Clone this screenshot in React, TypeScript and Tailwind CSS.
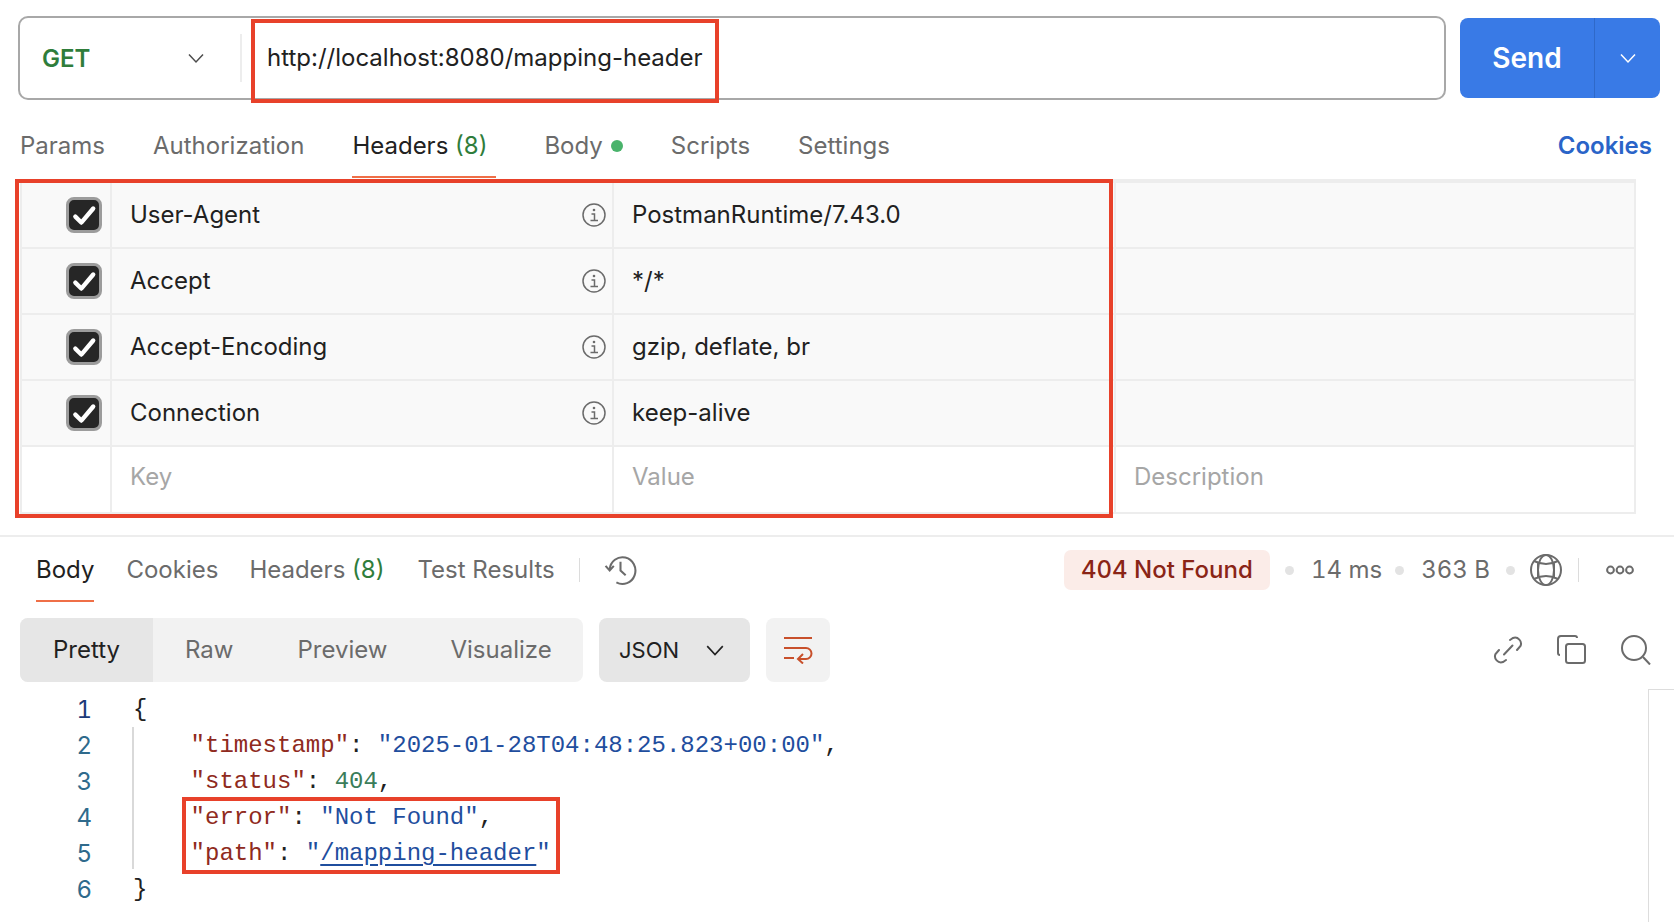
import React from "react";

const Chevron = ({ className = "" }: { className?: string }) => (
  <svg viewBox="0 0 18 18" className={className} fill="none" stroke="currentColor" strokeWidth="1.5">
    <path d="M2 5.5 L9 13 L16 5.5" />
  </svg>
);

const Info = () => (
  <svg viewBox="0 0 24 24" className="w-6 h-6 text-[#6b6b6b]" fill="none" stroke="currentColor" strokeWidth="1.5">
    <circle cx="12" cy="12" r="11" />
    <circle cx="12" cy="7" r="1.3" fill="currentColor" stroke="none" />
    <path d="M9.5 11 H12.5 V17 M8.5 17.5 H16" />
  </svg>
);

const Check = () => (
  <div className="w-9 h-9 rounded-[8px] bg-[#262626] border-[3px] border-[#9c9c9c] flex items-center justify-center">
    <svg viewBox="0 0 24 24" className="w-[26px] h-[26px]" fill="none" stroke="#fff" strokeWidth="4" strokeLinecap="round" strokeLinejoin="round">
      <path d="M4 13.5 L9.5 19 L20.5 6" />
    </svg>
  </div>
);

const rows = [
  ["User-Agent", "PostmanRuntime/7.43.0"],
  ["Accept", "*/*"],
  ["Accept-Encoding", "gzip, deflate, br"],
  ["Connection", "keep-alive"],
];

const Bullet = () => <span className="w-[9px] h-[9px] rounded-full bg-[#e3e3e3]" />;

const Q = ({ children }: { children: React.ReactNode }) => <span className="text-[#8f2a20]">{children}</span>;
const S = ({ children }: { children: React.ReactNode }) => <span className="text-[#1f4e9e]">{children}</span>;

const lineNums = [
  ["1", "text-[#1c3a78]"],
  ["2", "text-[#2f6a8c]"],
  ["3", "text-[#2f6a8c]"],
  ["4", "text-[#2f6a8c]"],
  ["5", "text-[#2f6a8c]"],
  ["6", "text-[#2f6a8c]"],
];

export default function App() {
  return (
    <div className="relative w-[1674px] h-[922px] overflow-hidden bg-white text-[24px] leading-[32px] text-[#212121] font-['Inter',sans-serif]">
      {/* request bar */}
      <div className="flex items-center pt-[16px] pl-[18px] pr-[14px] gap-[14px]">
        <div className="w-[1428px] h-[84px] border-2 border-[#a8a8a8] rounded-[10px] flex items-center">
          <div className="w-[222px] h-[48px] flex items-center justify-between pl-[22px] pr-[35px] border-r-2 border-[#ededed] shrink-0">
            <span className="font-semibold text-[#2f7d3b] pt-[2px]">GET</span>
            <Chevron className="w-[18px] h-[18px] text-[#4d4d4d]" />
          </div>
          <span className="pl-[25px]">http://localhost:8080/mapping-header</span>
        </div>
        <div className="w-[200px] h-[80px] rounded-[8px] bg-[#397ae6] flex text-white">
          <div className="w-[135px] flex items-center justify-center font-semibold text-[28px] border-r border-[#2f69c9]">Send</div>
          <div className="flex-1 flex items-center justify-center">
            <Chevron className="w-[18px] h-[18px]" />
          </div>
        </div>
      </div>

      {/* request tabs */}
      <div className="flex justify-between items-start h-[79px] pl-[20px] pr-[22px] pt-[30px]">
        <div className="flex text-[#6b6b6b]">
          <span className="mr-[48px]">Params</span>
          <span className="mr-[48px]">Authorization</span>
          <span className="relative w-[144px] mr-[48px] text-[#212121]">
            Headers <span className="text-[#2f7d3b]">(8)</span>
            <span className="absolute left-0 right-0 top-[46px] h-[2px] bg-[#ef6f47]" />
          </span>
          <span className="flex items-center mr-[48px]">
            Body<span className="ml-[8px] w-[12px] h-[12px] rounded-full bg-[#49b36b]" />
          </span>
          <span className="mr-[48px]">Scripts</span>
          <span>Settings</span>
        </div>
        <span className="font-semibold text-[#2a64c8]">Cookies</span>
      </div>

      {/* headers table */}
      <div className="ml-[20px] w-[1616px] border-2 border-t-[4px] border-[#ededed]">
        {rows.map(([k, v]) => (
          <div key={k} className="flex h-[66px] bg-[#f9f9f9] border-b-2 border-[#ededed] items-center">
            <div className="w-[90px] h-full flex items-center justify-end pr-[8px] border-r-2 border-[#ededed] shrink-0">
              <Check />
            </div>
            <div className="w-[502px] h-full flex items-center justify-between pl-[18px] pr-[6px] border-r-2 border-[#ededed] shrink-0">
              <span>{k}</span>
              <Info />
            </div>
            <div className="w-[502px] h-full flex items-center pl-[18px] border-r-2 border-[#ededed] shrink-0">{v}</div>
          </div>
        ))}
        <div className="flex h-[65px] items-center text-[#a6a6a6]">
          <div className="w-[90px] h-full border-r-2 border-[#ededed] shrink-0" />
          <div className="w-[502px] h-full flex items-center pl-[18px] pb-[6px] border-r-2 border-[#ededed] shrink-0">Key</div>
          <div className="w-[502px] h-full flex items-center pl-[18px] pb-[6px] border-r-2 border-[#ededed] shrink-0">Value</div>
          <div className="pl-[18px] pb-[6px]">Description</div>
        </div>
      </div>

      {/* response */}
      <div className="mt-[21px] border-t-2 border-[#ededed]">
        <div className="flex items-center justify-between h-[64px] pt-[2px] pl-[36px] pr-[40px]">
          <div className="flex items-center text-[#6b6b6b]">
            <span className="relative text-[#212121] mr-[32px]">
              Body
              <span className="absolute left-0 right-0 top-[46px] h-[2px] bg-[#ef6f47]" />
            </span>
            <span className="mr-[31px]">Cookies</span>
            <span className="mr-[33px]">
              Headers <span className="text-[#2f7d3b]">(8)</span>
            </span>
            <span>Test Results</span>
            <span className="ml-[24px] mr-[24px] w-px h-[24px] bg-[#dcdcdc]" />
            <svg viewBox="0 0 32 32" className="w-[33px] h-[33px] mb-[2px] text-[#6b6b6b]" fill="none" stroke="currentColor" strokeWidth="2">
              <path d="M5.5 16 A12.5 13 0 1 1 12 28.5" />
              <path d="M1.5 12.5 L5.5 17 L9.5 12.5" />
              <path d="M16 8.5 V17 L21 21.5" />
            </svg>
          </div>
          <div className="flex items-center text-[#6b6b6b] tabular-nums">
            <span className="h-[40px] w-[206px] rounded-[7px] bg-[#fbece8] text-[#8a2416] font-medium flex items-center justify-center mr-[15px]">404 Not Found</span>
            <Bullet />
            <span className="ml-[17px] mr-[13px]">14 ms</span>
            <Bullet />
            <span className="ml-[17px] mr-[16px]">363 B</span>
            <Bullet />
            <svg viewBox="0 0 32 32" className="ml-[15px] w-[32px] h-[32px]" fill="none" stroke="currentColor" strokeWidth="2">
              <circle cx="16" cy="16" r="15" />
              <ellipse cx="16" cy="16" rx="8" ry="15" />
              <path d="M4 7 Q16 13 28 7 M4 25 Q16 19 28 25 M1 16 H2 M8 8 V24 M24 8 V24" />
            </svg>
            <span className="ml-[16px] mr-[27px] w-px h-[24px] bg-[#dcdcdc]" />
            <svg viewBox="0 0 28 10" className="w-[28px] h-[10px]" fill="none" stroke="currentColor" strokeWidth="2">
              <circle cx="4.5" cy="5" r="3.4" />
              <circle cx="14" cy="5" r="3.4" />
              <circle cx="23.5" cy="5" r="3.4" />
            </svg>
          </div>
        </div>

        {/* toolbar */}
        <div className="flex items-center justify-between mt-[17px] pl-[20px] pr-[23px] h-[64px]">
          <div className="flex items-center h-full">
            <div className="flex w-[563px] h-full rounded-[8px] bg-[#f2f2f2] text-[#6b6b6b] overflow-hidden">
              <div className="w-[133px] bg-[#e6e6e6] text-[#212121] flex items-center justify-center">Pretty</div>
              <div className="flex items-center pl-[32px]">Raw</div>
              <div className="flex items-center pl-[64px]">Preview</div>
              <div className="flex items-center pl-[63px]">Visualize</div>
            </div>
            <div className="ml-[16px] w-[151px] h-full rounded-[8px] bg-[#e6e6e6] flex items-center justify-between pl-[20px] pr-[25px] text-[22px]">
              <span>JSON</span>
              <Chevron className="w-[20px] h-[20px] text-[#212121]" />
            </div>
            <div className="ml-[16px] w-[64px] h-full rounded-[8px] bg-[#f2f2f2] flex items-center justify-center text-[#c8502b]">
              <svg viewBox="0 0 30 28" className="w-[30px] h-[28px]" fill="none" stroke="currentColor" strokeWidth="2">
                <path d="M1 2 H29 M1 12 H23 A5.5 5.5 0 0 1 23 23 H16 M1 22 H11" />
                <path d="M20 18 L15 23 L20 27.5" />
              </svg>
            </div>
          </div>
          <div className="flex items-center gap-[34px] text-[#6b6b6b]">
            <svg viewBox="0 0 30 30" className="w-[30px] h-[30px]" fill="none" stroke="currentColor" strokeWidth="2" strokeLinecap="round">
              <path d="M17 5 L20 3 A6 6 0 0 1 27.5 11 L24 15 M13 25 L10 27 A6 6 0 0 1 2.5 19 L6 15" />
              <path d="M11 19.5 L19.5 10.5" />
            </svg>
            <svg viewBox="0 0 30 30" className="w-[30px] h-[30px]" fill="none" stroke="currentColor" strokeWidth="2">
              <path d="M3 20 A2 2 0 0 1 1 18 V4 A3 3 0 0 1 4 1 H18 A2 2 0 0 1 20 3" />
              <rect x="9" y="9" width="19" height="19" rx="2.5" />
            </svg>
            <svg viewBox="0 0 30 30" className="w-[30px] h-[30px]" fill="none" stroke="currentColor" strokeWidth="2">
              <circle cx="13" cy="13" r="12" />
              <path d="M22 22 L29 29.5" />
            </svg>
          </div>
        </div>

        {/* code */}
        <div className="flex mt-[10px] font-['Liberation_Mono',monospace] leading-[36px]">
          <div className="w-[92px] flex flex-col items-end font-['Inter',sans-serif] tabular-nums">
            {lineNums.map(([n, c]) => (
              <span key={n} className={c}>{n}</span>
            ))}
          </div>
          <div className="relative pl-[41px] whitespace-pre">
            <span className="absolute left-[40px] top-[35px] w-[2px] h-[142px] bg-[#d9d9d9]" />
            <div>{"{"}</div>
            <div>    <Q>"timestamp"</Q>: <S>"2025-01-28T04:48:25.823+00:00"</S>,</div>
            <div>    <Q>"status"</Q>: <span className="text-[#3a7d5a]">404</span>,</div>
            <div>    <Q>"error"</Q>: <S>"Not Found"</S>,</div>
            <div>    <Q>"path"</Q>: <S>"<span className="underline underline-offset-4">/mapping-header</span>"</S></div>
            <div>{"}"}</div>
          </div>
        </div>
      </div>

      {/* faint corner of an adjacent panel */}
      <div className="absolute left-[1648px] top-[689px] w-[40px] h-[250px] border border-[#dddddd]" />

      {/* red annotation boxes */}
      <div className="absolute left-[251px] top-[19px] w-[468px] h-[84px] border-[4px] border-[#e8412a]" />
      <div className="absolute left-[15px] top-[179px] w-[1098px] h-[339px] border-[4px] border-[#e8412a]" />
      <div className="absolute left-[182px] top-[797px] w-[378px] h-[77px] border-[4px] border-[#e8412a]" />
    </div>
  );
}
